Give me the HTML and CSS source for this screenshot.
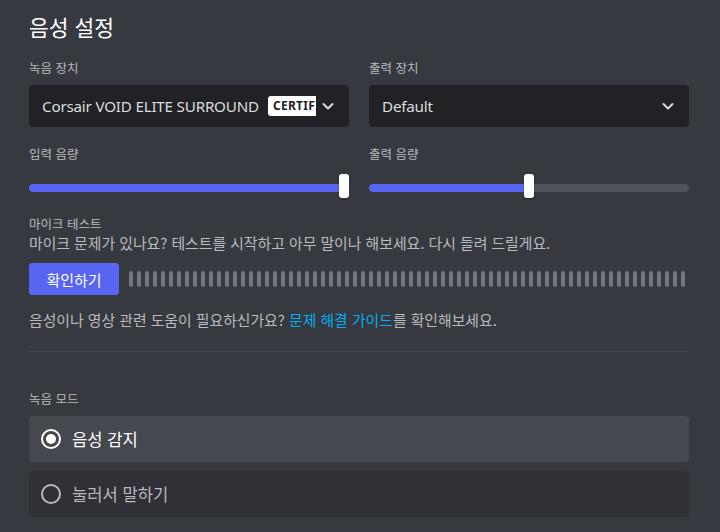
FILE: index.html
```html
<!DOCTYPE html>
<html lang="ko">
<head>
<meta charset="utf-8">
<title>음성 설정</title>
<link rel="stylesheet" href="styles.css">
</head>
<body>
<div class="page">
  <h1 class="title">음성 설정</h1>

  <div class="cols cols-devices">
    <div class="field">
      <div class="label">녹음 장치</div>
      <div class="select">
        <div class="select-value">
          <span class="device-name">Corsair VOID ELITE SURROUND</span>
          <span class="badge">CERTIFIED</span>
        </div>
        <svg class="chevron" viewBox="0 0 12 12" width="12" height="12"><path d="M1.5 4 L6 8.5 L10.5 4" fill="none" stroke="#dcddde" stroke-width="2" stroke-linecap="round" stroke-linejoin="round"/></svg>
      </div>
    </div>
    <div class="field">
      <div class="label">출력 장치</div>
      <div class="select">
        <div class="select-value">
          <span class="device-name">Default</span>
        </div>
        <svg class="chevron" viewBox="0 0 12 12" width="12" height="12"><path d="M1.5 4 L6 8.5 L10.5 4" fill="none" stroke="#dcddde" stroke-width="2" stroke-linecap="round" stroke-linejoin="round"/></svg>
      </div>
    </div>
  </div>

  <div class="cols cols-volume">
    <div class="field">
      <div class="label">입력 음량</div>
      <div class="slider">
        <div class="track"><div class="fill" style="width: calc(100% - 5px)"></div></div>
        <div class="thumb" style="left: calc((100% - 10px) * 1)"></div>
      </div>
    </div>
    <div class="field">
      <div class="label">출력 음량</div>
      <div class="slider">
        <div class="track"><div class="fill" style="width: calc((100% - 10px) * 0.5 + 5px)"></div></div>
        <div class="thumb" style="left: calc((100% - 10px) * 0.5)"></div>
      </div>
    </div>
  </div>

  <div class="label mic-label">마이크 테스트</div>
  <p class="desc">마이크 문제가 있나요? 테스트를 시작하고 아무 말이나 해보세요. 다시 들려 드릴게요.</p>
  <div class="mic-row">
    <button class="btn">확인하기</button>
    <div class="meter">
      <span></span><span></span><span></span><span></span><span></span><span></span><span></span><span></span><span></span><span></span>
      <span></span><span></span><span></span><span></span><span></span><span></span><span></span><span></span><span></span><span></span>
      <span></span><span></span><span></span><span></span><span></span><span></span><span></span><span></span><span></span><span></span>
      <span></span><span></span><span></span><span></span><span></span><span></span><span></span><span></span><span></span><span></span>
      <span></span><span></span><span></span><span></span><span></span><span></span><span></span><span></span><span></span><span></span>
      <span></span><span></span><span></span><span></span><span></span><span></span><span></span><span></span><span></span><span></span>
      <span></span><span></span><span></span><span></span><span></span><span></span><span></span><span></span><span></span><span></span>
    </div>
  </div>
  <p class="desc help">음성이나 영상 관련 도움이 필요하신가요? <a class="link" href="#">문제 해결 가이드</a>를 확인해보세요.</p>

  <div class="divider"></div>

  <div class="label mode-label">녹음 모드</div>
  <div class="options">
    <div class="option selected">
      <span class="radio"></span>
      <span class="option-text">음성 감지</span>
    </div>
    <div class="option">
      <span class="radio"></span>
      <span class="option-text">눌러서 말하기</span>
    </div>
  </div>
</div>
</body>
</html>
```

FILE: styles.css
```css
* { box-sizing: border-box; }
html, body {
  margin: 0;
  padding: 0;
  background: #36393f;
}
body {
  font-family: "Noto Sans CJK KR", "Noto Sans", sans-serif;
  color: #b9bbbe;
  width: 720px;
  height: 532px;
  overflow: hidden;
}
.page {
  padding: 15px 31px 0 29px;
}
.title {
  margin: 0;
  font-size: 21.5px;
  line-height: 24px;
  font-weight: 400;
  color: #ffffff;
}
.cols {
  display: grid;
  grid-template-columns: minmax(0, 1fr) minmax(0, 1fr);
  column-gap: 20px;
}
.cols-devices { margin-top: 21px; }
.cols-volume { margin-top: 19px; }
.label {
  font-size: 12.5px;
  line-height: 16px;
  color: #b9bbbe;
  font-weight: 400;
}
.field .label { margin-bottom: 9px; }
.select {
  height: 42px;
  background: #202225;
  border-radius: 4px;
  display: flex;
  align-items: center;
  padding: 0 15px 0 13px;
  color: #dcddde;
}
.select-value {
  flex: 1;
  min-width: 0;
  display: flex;
  align-items: center;
  overflow: hidden;
  white-space: nowrap;
}
.device-name {
  font-family: "Noto Sans", "Noto Sans CJK KR", sans-serif;
  font-size: 15.2px;
  letter-spacing: -0.2px;
  color: #dcddde;
  flex-shrink: 0;
}
.badge {
  flex-shrink: 0;
  margin-left: 9px;
  height: 20px;
  line-height: 20px;
  background: #ffffff;
  color: #202225;
  border-radius: 3px;
  padding: 0 5px;
  font-family: "Noto Sans", sans-serif;
  font-weight: 700;
  font-size: 12px;
  letter-spacing: 0.3px;
}
.chevron {
  flex-shrink: 0;
  margin-left: 6px;
}
.slider {
  position: relative;
  height: 24px;
  margin-top: 12px;
}
.track {
  position: absolute;
  left: 0;
  right: 0;
  top: 10px;
  height: 8px;
  border-radius: 4px;
  background: #4f545c;
  overflow: hidden;
}
.fill {
  height: 100%;
  background: #5865f2;
  border-radius: 4px 0 0 4px;
}
.thumb {
  position: absolute;
  top: 0;
  width: 10px;
  height: 24px;
  border-radius: 3px;
  background: #ffffff;
  box-shadow: 0 1px 2px rgba(0,0,0,0.35);
}
.mic-label { margin-top: 18px; }
.desc {
  margin: 2px 0 0;
  font-size: 14.85px;
  line-height: 18px;
  color: #b9bbbe;
}
.mic-row {
  display: flex;
  align-items: center;
  margin-top: 11px;
  gap: 10px;
}
.btn {
  width: 90px;
  height: 32px;
  border: none;
  border-radius: 3px;
  background: #5865f2;
  color: #ffffff;
  font-family: "Noto Sans CJK KR", sans-serif;
  font-size: 15px;
  font-weight: 400;
  padding: 0;
}
.meter {
  display: flex;
  gap: 4px;
  align-items: center;
}
.meter span {
  width: 4px;
  height: 16px;
  border-radius: 2px;
  background: #72767d;
}
.help { margin-top: 16px; }
.link {
  color: #00aff4;
  text-decoration: none;
}
.divider {
  margin-top: 22px;
  height: 1px;
  background: #44474e;
}
.mode-label { margin-top: 39px; }
.options {
  margin-top: 9px;
  display: flex;
  flex-direction: column;
  gap: 9px;
}
.option {
  height: 46px;
  border-radius: 4px;
  background: #2f3136;
  display: flex;
  align-items: center;
  padding-left: 12px;
  color: #b9bbbe;
}
.option.selected {
  background: #45484f;
  color: #ffffff;
}
.radio {
  width: 20px;
  height: 20px;
  border-radius: 50%;
  border: 2px solid #b9bbbe;
  flex-shrink: 0;
  position: relative;
}
.option.selected .radio {
  border-color: #ffffff;
}
.option.selected .radio::after {
  content: "";
  position: absolute;
  left: 3px;
  top: 3px;
  width: 10px;
  height: 10px;
  border-radius: 50%;
  background: #ffffff;
}
.option-text {
  margin-left: 11px;
  font-size: 16.6px;
  line-height: 20px;
}
```
